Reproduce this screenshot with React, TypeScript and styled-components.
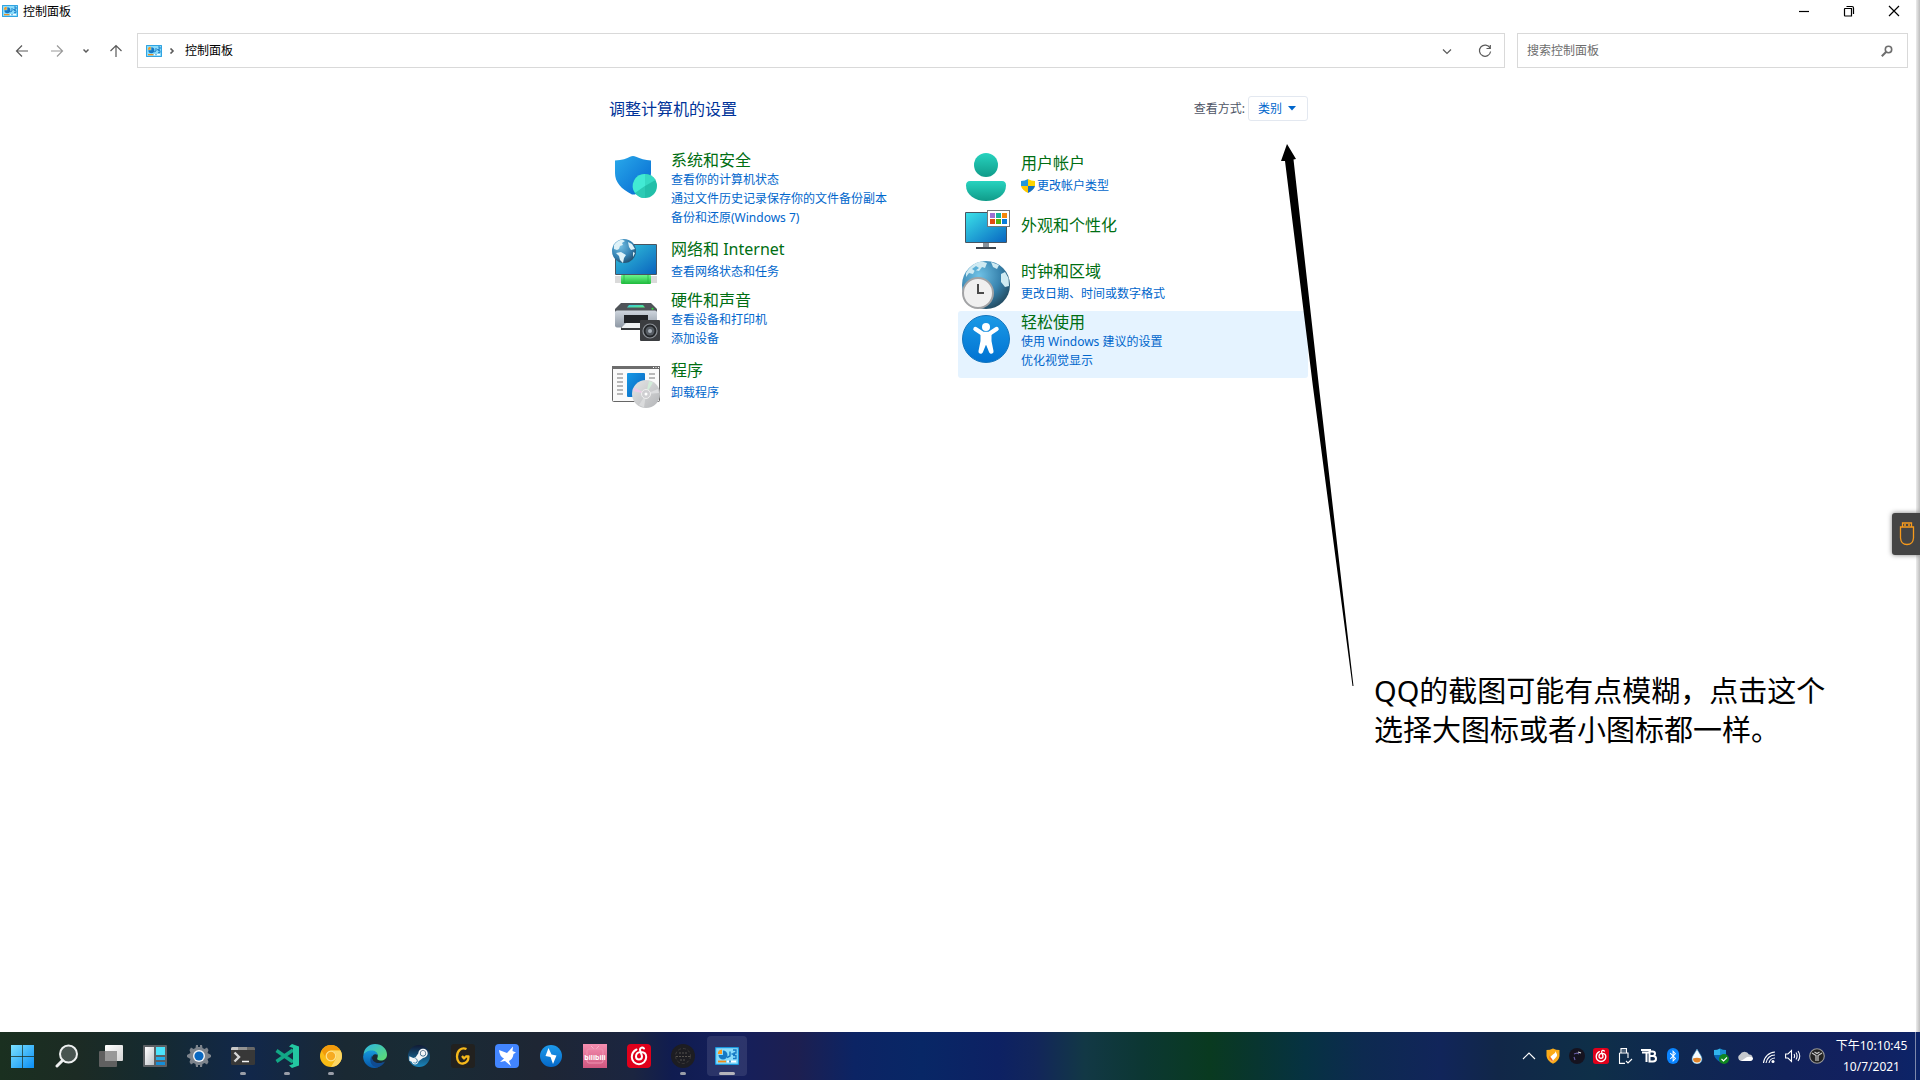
import React from "react";
import styled, { createGlobalStyle } from "styled-components";
import { FaSteamSymbol, FaBluetoothB } from "react-icons/fa";

const GlobalStyle = createGlobalStyle`
  * { box-sizing: border-box; }
  body {
    margin: 0;
    background: #fff;
    color: #000;
    font: 12px/19px "Noto Sans", "Noto Sans CJK SC", sans-serif;
  }
  h1, h2, p, ul { margin: 0; padding: 0; font-weight: 400; list-style: none; }
  button, input, select { font: inherit; color: inherit; margin: 0; padding: 0; border: 0; background: none; }
  a { text-decoration: none; color: inherit; }
  svg { display: block; flex: none; }
`;

/* ---------- layout ---------- */

const Desktop = styled.div`
  position: relative;
  display: flex;
  flex-direction: column;
  min-height: 100vh;
  overflow: hidden;
`;

const WindowRow = styled.div`
  flex: 1;
  display: flex;
`;

const WindowPane = styled.div`
  flex: 1;
  display: flex;
  flex-direction: column;
`;

const WindowShadow = styled.div`
  width: 4px;
  background: linear-gradient(90deg, #ececec, #bdbdbd);
`;

const TitleBar = styled.header`
  display: flex;
  align-items: center;
  justify-content: space-between;
  height: 22px;
  padding-left: 2px;
`;

const TitleText = styled.h1`
  display: flex;
  align-items: center;
  gap: 5px;
  font-size: 12px;
`;

const Caption = styled.div`
  display: flex;
`;

const CaptionButton = styled.button`
  display: grid;
  place-items: center;
  width: 45px;
  height: 20px;
  &:hover { background: #e9e9e9; }
`;

const Toolbar = styled.div`
  display: grid;
  grid-template-columns: 133px 60fr 17fr;
  align-items: center;
  padding: 11px 8px 0 4px;
`;

const NavButtons = styled.nav`
  display: flex;
  align-items: center;
`;

const NavButton = styled.button<{ $width?: number; $faded?: boolean }>`
  flex: none;
  display: grid;
  place-items: center;
  width: ${(p) => p.$width ?? 35}px;
  height: 33px;
  color: ${(p) => (p.$faded ? "#9a9a9a" : "#5a5a5a")};
`;

const AddressBar = styled.div`
  display: flex;
  align-items: center;
  height: 35px;
  margin-right: 12px;
  border: 1px solid #d9d9d9;
  padding-left: 8px;
`;

const Crumb = styled.a`
  flex: 1;
  padding-left: 3px;
`;

const SearchBox = styled.label`
  display: flex;
  align-items: center;
  height: 35px;
  padding: 0 14px 0 9px;
  border: 1px solid #d9d9d9;
  color: #6d6d6d;
`;

const SearchInput = styled.input`
  flex: 1;
  min-width: 0;
  outline: 0;
  &::placeholder { color: #6d6d6d; opacity: 1; }
`;

const Content = styled.main`
  width: 700px;
  margin: 0 auto;
  padding-top: 28px;
`;

const ContentHead = styled.div`
  display: flex;
  align-items: center;
  justify-content: space-between;
  height: 25px;
  padding-left: 1px;
`;

const Heading = styled.h2`
  font-size: 16px;
  line-height: 24px;
  color: #003399;
`;

const ViewBy = styled.div`
  display: flex;
  align-items: center;
  gap: 3px;
  color: #4e5565;
`;

const SelectFrame = styled.span`
  position: relative;
  display: block;
  color: #0066cc;
`;

const ViewSelect = styled.select`
  appearance: none;
  width: 60px;
  height: 25px;
  padding: 0 9px;
  border: 1px solid #e3e8f0;
  border-radius: 3px;
  background: #fff;
`;

const SelectArrow = styled.svg`
  position: absolute;
  right: 12px;
  top: 10px;
  pointer-events: none;
`;

const Columns = styled.div`
  display: grid;
  grid-template-columns: 1fr 1fr;
  align-items: start;
  padding-top: 28px;
`;

const Category = styled.li<{ $active?: boolean; $tall?: boolean }>`
  display: flex;
  gap: 11px;
  min-height: 54px;
  padding: 0 4px ${(p) => (p.$tall ? 8 : 0)}px;
  border-radius: 3px;
  background: ${(p) => (p.$active ? "#e5f3ff" : "transparent")};
  & > svg { margin-top: 4px; }
`;

const CategoryBody = styled.div<{ $links: number }>`
  display: grid;
  align-content: start;
  row-gap: ${(p) => (p.$links === 1 ? 3 : 0)}px;
  padding-top: ${(p) => (p.$links === 0 ? 13 : p.$links === 1 ? 5 : 2)}px;
`;

const CategoryTitle = styled.a`
  font-size: 16px;
  line-height: 19px;
  color: #006e12;
  &:hover { text-decoration: underline; }
`;

const TaskLink = styled.a`
  display: flex;
  align-items: center;
  gap: 2px;
  color: #0066cc;
  &:hover { text-decoration: underline; }
`;

/* ---------- overlays ---------- */

const ArrowMark = styled.svg`
  position: absolute;
  left: 1280px;
  top: 144px;
  pointer-events: none;
`;

const Note = styled.p`
  position: absolute;
  left: 1374px;
  top: 671px;
  font-size: 29px;
  line-height: 39px;
  white-space: nowrap;
`;

const UsbTab = styled.button`
  position: absolute;
  right: 0;
  top: 513px;
  display: grid;
  place-items: center;
  width: 28px;
  height: 42px;
  padding-left: 2px;
  border-radius: 3px 0 0 3px;
  background: #444;
  box-shadow: 0 0 5px rgba(0, 0, 0, 0.5);
`;

/* ---------- taskbar ---------- */

const Taskbar = styled.footer`
  display: flex;
  justify-content: space-between;
  height: 48px;
  color: #fff;
  background: linear-gradient(
    90deg,
    #1a3020 0%, #1c2b24 4%, #152a30 8%, #11274a 13%, #1a2933 18%, #182b35 22%,
    #1e2634 28%, #1b2540 33%, #101c50 35%, #151f5c 38.5%, #1d1f50 41.5%, #0c2464 44.5%,
    #082766 48%, #0d2163 52%, #12265a 54%, #123845 56.5%, #0c3733 59.5%, #093a20 63%,
    #083530 65.5%, #063242 68%, #0d2a50 71%, #11255a 75%, #112748 78%, #0e2f48 83%,
    #0f2850 87%, #11225a 93%, #122060 97%, #0c2468 100%
  );
`;

const AppList = styled.div`
  display: flex;
  align-items: center;
  padding-left: 1px;
`;

const AppSlot = styled.button<{ $active?: boolean }>`
  position: relative;
  display: grid;
  place-items: center;
  width: 40px;
  height: 40px;
  margin: 0 2px;
  border-radius: 4px;
  background: ${(p) => (p.$active ? "rgba(255,255,255,.1)" : "transparent")};
`;

const RunMark = styled.span<{ $wide?: boolean }>`
  position: absolute;
  bottom: 1px;
  left: 50%;
  width: ${(p) => (p.$wide ? 16 : 6)}px;
  height: 3px;
  border-radius: 2px;
  background: ${(p) => (p.$wide ? "#b4b4bc" : "#9a9ea8")};
  transform: translateX(-50%);
`;

const Tray = styled.div`
  display: flex;
  align-items: center;
`;

const TrayButton = styled.button`
  display: grid;
  place-items: center;
  width: 24px;
  height: 40px;
`;

const Clock = styled.time`
  margin: 0 7px 0 6px;
  width: 73px;
  text-align: center;
  line-height: 21px;
  white-space: nowrap;
`;

const PeekEdge = styled.div`
  align-self: stretch;
  width: 5px;
  border-left: 1px solid #7d88ac;
`;

/* ---------- drawings ---------- */

const G = ({ id, a, b, v }: { id: string; a: string; b: string; v?: boolean }) => (
  <linearGradient id={id} x1="0" y1="0" x2={v ? "0" : "1"} y2="1">
    <stop offset="0" stopColor={a} />
    <stop offset="1" stopColor={b} />
  </linearGradient>
);

const PanelIcon = ({ w = 16, h = 12 }) => (
  <svg width={w} height={h} viewBox="0 0 24 18">
    <rect width="24" height="18" rx="1" fill="#1a96dc" />
    <rect x="1.2" y="1.2" width="21.6" height="15.6" fill="#8adcfb" />
    <path d="M8 3.500A4.500 4.500 0 1 1 3.500 8H8z" fill="#1679c4" />
    <path d="M7 7V2.500A4.500 4.500 0 0 0 2.800 7z" fill="#fa9a1e" />
    <path d="M12 10.500L15 9V4.500M18 3H21V6H18.500M18 8.500H21V11.500H18M16.500 7H20" stroke="#1679c4" strokeWidth="1.4" fill="none" />
    <path d="M3 14.500h8" stroke="#f08a15" strokeWidth="1.800" />
    <path d="M12 14.500h9" stroke="#fff" strokeWidth="1.800" />
    <path d="M15 13.500v2" stroke="#1679c4" strokeWidth="1.600" />
  </svg>
);

const Stroke = ({ d, size = 14, w = 1.2 }: { d: string; size?: number; w?: number }) => (
  <svg width={size} height={size} viewBox={`0 0 ${size} ${size}`} fill="none" stroke="currentColor" strokeWidth={w}>
    <path d={d} />
  </svg>
);

const SecurityIcon = () => (
  <svg width="48" height="48" viewBox="0 0 48 48">
    <defs><G id="sec" a="#29a9ea" b="#0567d0" /></defs>
    <path d="M3 7.500C10 7 15 5.500 18 3.700Q21 2.500 24 3.700C28 5.500 33 7.200 39 7.500V20C39 30 32 37 23 41.500H20C9 36 3 29 3 20z" fill="url(#sec)" />
    <circle cx="33" cy="33" r="12" fill="#22bfa9" />
    <path d="M33 33V45A12 12 0 0 1 23 40z" fill="#2bcab4" />
    <path d="M33 33V21A12 12 0 0 0 23 40z" fill="#42ead4" />
    <path d="M33 33V21A12 12 0 0 1 43.500 27z" fill="#35dac3" />
  </svg>
);

const NetworkIcon = () => (
  <svg width="48" height="48" viewBox="0 0 48 48">
    <defs>
      <G id="net" a="#35c8dc" b="#0a63be" />
      <radialGradient id="glb" cx=".35" cy=".3" r=".75"><stop offset="0" stopColor="#75bfe2" /><stop offset=".6" stopColor="#3684b5" /><stop offset="1" stopColor="#24506f" /></radialGradient>
      <G id="grn" a="#6cf58c" b="#1fba3c" v />
    </defs>
    <rect x="3" y="5" width="42" height="31" rx="1" fill="#4a5560" />
    <rect x="4" y="6" width="40" height="29" fill="url(#net)" />
    <circle cx="12" cy="12" r="12" fill="url(#glb)" />
    <path d="M2 6C4 3 7 1 10 .5L13 2l-3 2 1 2-3 1-1 3-2 1-3-1zM4 14l5-1 5 3-2 3-1 5-3-3-1-4zM16 3l4 2 3 5-4 1-2-3zM21 13l2 1-2 4z" fill="#dff2f8" />
    <rect x="3" y="37" width="42" height="7" fill="#dadada" />
    <rect x="9" y="36" width="30" height="9" rx="1" fill="url(#grn)" />
    <path d="M12 36v9M36 36v9" stroke="#25b943" strokeWidth=".8" />
  </svg>
);

const HardwareIcon = () => (
  <svg width="48" height="48" viewBox="0 0 48 48">
    <defs><G id="prn" a="#cfd6de" b="#8e98a4" v /><G id="scn" a="#36c6e8" b="#5bf07d" /></defs>
    <path d="M9 10H39L45 16V19H3V16z" fill="#4f5358" />
    <path d="M17 12H31L33 14.500H15z" fill="url(#scn)" />
    <circle cx="40.500" cy="15.800" r="1" fill="#2fe43f" />
    <rect x="3" y="17.500" width="42" height="17" rx="2" fill="url(#prn)" />
    <rect x="12" y="22" width="24" height="8" fill="#202327" />
    <path d="M9 34H30V37H9z" fill="#35383b" />
    <path d="M14 30H34L31 35H9z" fill="#edf0f2" />
    <rect x="28" y="27" width="20" height="21" rx="1" fill="#3b3d40" />
    <circle cx="38" cy="38" r="7" fill="#24272a" stroke="#8d9298" strokeWidth="1.200" />
    <circle cx="38" cy="38" r="4.500" fill="#555b62" />
    <circle cx="38" cy="38" r="2" fill="#a9b1ba" />
  </svg>
);

const ProgramsIcon = () => (
  <svg width="48" height="48" viewBox="0 0 48 48">
    <defs><G id="prg" a="#1599e6" b="#0a62bd" /><G id="cd" a="#e6e6e6" b="#b3b5b8" /></defs>
    <rect x=".5" y="6.500" width="47" height="35" rx="1" fill="#fafafa" stroke="#666" />
    <path d="M0 6H48V9H0z" fill="#6d6d6d" />
    <path d="M41 7.500h1M43.500 7.500h1M46 7.500h1" stroke="#fff" />
    <path d="M5 14h6M5 18h6M5 22h6M5 26h6M5 30h6M5 34h6M37 14h6M37 18h6" stroke="#777" />
    <rect x="15" y="13" width="18" height="24" rx="1" fill="url(#prg)" />
    <circle cx="34" cy="34" r="14" fill="url(#cd)" />
    <path d="M34 34L22.500 27.500L21 31z" fill="#eecbe6" />
    <path d="M34 34L37 21L41 22.500z" fill="#d2ecd9" />
    <path d="M34 34L46 29L47 33z" fill="#dcdddf" />
    <path d="M34 34L27 45L32 47.500z" fill="#dadbdc" />
    <circle cx="34" cy="34" r="4.500" fill="#cfcfd2" stroke="#efefef" />
    <circle cx="34" cy="34" r="1.500" fill="#fff" />
  </svg>
);

const UserIcon = () => (
  <svg width="48" height="48" viewBox="0 0 48 48">
    <defs><G id="usr" a="#27d3bf" b="#109b89" v /></defs>
    <circle cx="24" cy="12" r="12" fill="url(#usr)" />
    <path d="M8 28H40Q44 28 44 32.500C44 42 35 48 24 48S4 42 4 32.500Q4 28 8 28z" fill="url(#usr)" />
  </svg>
);

const AppearanceIcon = () => (
  <svg width="48" height="48" viewBox="0 0 48 48">
    <defs><G id="app" a="#3ae0e8" b="#0867c2" /></defs>
    <rect x="21" y="35" width="6" height="6" fill="#89939c" />
    <rect x="14" y="40" width="20" height="2" fill="#3d454d" />
    <rect x="3" y="5" width="42" height="31" rx="1" fill="#475460" />
    <rect x="4" y="6" width="40" height="29" fill="url(#app)" />
    <rect x="25.500" y="3.500" width="22" height="16" fill="#fff" stroke="#74777a" />
    <path d="M28 6h5v5h-5z" fill="#9b6fd3" /><path d="M34 6h5v5h-5z" fill="#14b39d" /><path d="M40 6h5v5h-5z" fill="#f5870a" />
    <path d="M28 12h5v5h-5z" fill="#e34b12" /><path d="M34 12h5v5h-5z" fill="#58b30c" /><path d="M40 12h5v5h-5z" fill="#087ddb" />
  </svg>
);

const ClockIcon = () => (
  <svg width="48" height="48" viewBox="0 0 48 48">
    <defs><radialGradient id="wld" cx=".35" cy=".3" r=".75"><stop offset="0" stopColor="#70c2e6" /><stop offset=".6" stopColor="#3883ae" /><stop offset="1" stopColor="#234c62" /></radialGradient></defs>
    <circle cx="24" cy="24" r="24" fill="url(#wld)" />
    <path d="M4 12C8 5 14 1 20 .5L25 2L23 7L20 6L17 10L13 9L11 13L7 12L4 16zM29 1L37 4L35 8L31 6zM39 13L43 11L46.500 17L47 25L43 26L39 21z" fill="#cfeaf2" />
    <path d="M10 8l4-3 3 2-4 3z" fill="#59aed6" />
    <circle cx="16" cy="32" r="15" fill="#f0f0f0" stroke="#a2a3a5" strokeWidth="2" />
    <path d="M16 23V32H22" fill="none" stroke="#4a4a4a" strokeWidth="2" />
  </svg>
);

const EaseIcon = () => (
  <svg width="48" height="48" viewBox="0 0 48 48">
    <defs><G id="eas" a="#1b9ae6" b="#0072d2" v /></defs>
    <circle cx="24" cy="24" r="23.500" fill="url(#eas)" stroke="#1475bd" />
    <circle cx="24" cy="12" r="4" fill="#fff" />
    <path d="M13.500 14L21 19H27L34.500 14M24 19V28" stroke="#fff" strokeWidth="4.500" strokeLinecap="round" strokeLinejoin="round" fill="none" />
    <path d="M18.500 17H29.500V26L31.500 36C32 39 28 40 27 37L24 29.500L21 37C20 40 16 39 16.500 36L18.500 26z" fill="#fff" />
  </svg>
);

const UacShield = () => (
  <svg width="14" height="14" viewBox="0 0 14 14">
    <path d="M0 2Q4 2 7 0V7H0z" fill="#2197dc" /><path d="M14 2Q10 2 7 0V7H14z" fill="#ffd400" />
    <path d="M0 7H7V14Q1 11 0 7z" fill="#ffc800" /><path d="M14 7H7V14Q13 11 14 7z" fill="#146fbd" />
  </svg>
);

const Box24 = ({ children, size = 24 }: { children: React.ReactNode; size?: number }) => (
  <svg width={size} height={size} viewBox="0 0 24 24">{children}</svg>
);

const CloudMusicLogo = ({ size = 24 }: { size?: number }) => (
  <Box24 size={size}>
    <rect width="24" height="24" rx="4" fill="#e0001b" />
    <path
      d="M9.500 5.500C6.500 7 4.800 9.800 4.800 13A7.200 7.200 0 0 0 19.200 13C19.200 9.700 16.800 8 13.700 8C10.800 8 9 10 9 12.500A3 3 0 0 0 15 12.500C15 11 13 7.500 13 5.500C13 3.500 15.500 3 17 4.500"
      fill="none" stroke="#fff" strokeWidth="2" strokeLinecap="round"
    />
  </Box24>
);

const StartLogo = () => (
  <Box24>
    <defs><linearGradient id="win" gradientUnits="userSpaceOnUse" x1="0" y1="0" x2="24" y2="24"><stop offset="0" stopColor="#7de3ff" /><stop offset="1" stopColor="#088df5" /></linearGradient></defs>
    <path d="M0 1H11.300V12.200H0zM12 1H23V12.200H12zM0 13H11.300V24H0zM12 13H23V24H12z" fill="url(#win)" />
  </Box24>
);
const SearchLogo = () => (
  <Box24><circle cx="13.500" cy="10" r="8.500" fill="#485450" stroke="#eef0f0" strokeWidth="2" /><path d="M7.500 16.500L2 22" stroke="#eef0f0" strokeWidth="3" strokeLinecap="round" /></Box24>
);
const TaskViewLogo = () => (
  <Box24><defs><G id="tv" a="#ffffff" b="#d4d4d4" /></defs><rect x="6" y="1" width="18" height="16" rx="1" fill="url(#tv)" /><rect x="0" y="7" width="18" height="16" rx="1" fill="#606060" /><path d="M6 7H18V17H6z" fill="#989898" /></Box24>
);
const WidgetsLogo = () => (
  <Box24><defs><G id="wd" a="#fff" b="#bcc1c6" /></defs><rect y="1" width="24" height="22" rx="1" fill="#5c6064" /><rect x="2" y="3" width="9" height="18" fill="url(#wd)" /><rect x="13" y="3" width="9" height="8" fill="#4be3fb" /><rect x="13" y="13" width="9" height="3" fill="#22aee8" /><rect x="13" y="18" width="9" height="3" fill="#158ed8" /></Box24>
);
const SettingsLogo = () => (
  <Box24>
    <path d="M8.500 4L9 1H11V3H13V1H15L15.500 4L17.500 5L20 3.500L21.500 6L20.500 9L24 11V13L20.500 15L21.500 18L20 20.500L17.500 19L15.500 20L15 23H13V21H11V23H9L8.500 20L6.500 19L4 20.500L2.500 18L3.500 15L0 13V11L3.500 9L2.500 6L4 3.500L6.500 5z" fill="#7d848c" />
    <circle cx="12" cy="12" r="6" fill="#f2f5f8" /><circle cx="12" cy="12" r="4.600" fill="#0867c0" />
  </Box24>
);
const TerminalLogo = () => (
  <Box24><rect y="3" width="24" height="18" rx="1.500" fill="#383838" /><path d="M0 6V4.500Q0 3 1.500 3H16V6z" fill="#c7c7c7" /><path d="M7 3h9v3H7z" fill="#929292" /><path d="M16 3h6.500Q24 3 24 4.500V6h-8z" fill="#686868" /><path d="M3.500 8.500L8 13L3.500 17.500" fill="none" stroke="#d6d6d6" strokeWidth="2.400" /><path d="M11 17.500h7" stroke="#f5f5f5" strokeWidth="1.500" /></Box24>
);
const CodeLogo = () => (
  <Box24><path d="M18 6L1.500 17.500M18 18L1.500 6.500" stroke="#12a886" strokeWidth="3.400" /><path d="M17 0L24 2.500V21.500L17 24L14 21.500L18 20V4L14 2.500z" fill="#23c7a1" /></Box24>
);
const CanaryLogo = () => (
  <Box24><circle cx="12" cy="12" r="11" fill="#f9bc15" /><path d="M2.500 6.500A11 11 0 0 1 21.500 6.500H12A6 6 0 0 0 7 14z" fill="#f29a0b" /><path d="M21.500 6.500A11 11 0 0 1 12 23L17 14.500A6 6 0 0 0 12 6.500z" fill="#fdd765" /><circle cx="12" cy="12" r="4.800" fill="#f6ab22" stroke="#fde18c" strokeWidth="1.300" /></Box24>
);
const EdgeLogo = () => (
  <Box24>
    <defs><G id="ed1" a="#2bb5e8" b="#60de6a" /><G id="ed2" a="#1598dc" b="#0756a7" v /></defs>
    <path d="M.5 11C1 4 6 0 12 0C19 0 24 5 24 10.500C24 14.500 21 16.500 18 16.500C15 16.500 13.500 15.500 14.500 13.500C16 10 12.500 7 9 7C5 7 2 9 .5 11z" fill="url(#ed1)" />
    <path d="M.2 12C1 8.500 5 6.500 8.500 6.500C12 6.500 14.500 8.500 14.700 11C11 9 8.500 12 9 15C9.500 19 14 21.500 20 18.500C17 23 14 24 11 24C5 24-.5 18 .2 12z" fill="url(#ed2)" />
    <path d="M9 11.500C5 17 9 23 14 23.500C18 22.500 20.500 20.500 22 17.500C14 21.500 8 17.500 9 11.500z" fill="#104b91" />
  </Box24>
);
const SteamLogo = () => (
  <Box24>
    <defs><G id="stm" a="#101a34" b="#1a86bb" v /></defs>
    <circle cx="12" cy="12" r="11" fill="url(#stm)" />
    <FaSteamSymbol x={1} y={2} size={21} color="#f3f5f7" />
  </Box24>
);
const GoldLogo = () => (
  <Box24><rect width="24" height="24" rx="3" fill="#22211f" /><path d="M15.500 5C10 2.500 6 7.500 6 12.500C6 18 9 20 12 19.500C16 19 17.500 16 17.500 12.500H15L13 14.500L11 12" fill="none" stroke="#f6b91b" strokeWidth="2.300" strokeLinejoin="round" /></Box24>
);
const BirdLogo = () => (
  <Box24><rect width="24" height="24" rx="4" fill="#4285ff" /><path d="M4 6L12 9L18 2.500L17.500 7L21 8.500L18.500 10C18 14 16 16 14 17L16 22L10 17L5 18L9 14.500C6 13 4.500 10.500 4 6z" fill="#fff" /></Box24>
);
const BoltLogo = () => (
  <Box24><defs><G id="blt" a="#1d9bec" b="#0568c8" v /></defs><circle cx="12" cy="12" r="11" fill="url(#blt)" /><path d="M9.500 4L6.500 12L11.500 13L14 20L17.500 11.500L12.500 10.500z" fill="#fff" /></Box24>
);
const BiliLogo = () => (
  <Box24>
    <defs><G id="bil" a="#f58fb0" b="#cf567f" v /></defs><rect width="24" height="24" fill="url(#bil)" />
    <path d="M8 2l3 3M16 2l-3 3" stroke="#f7b3c9" /><rect x="4" y="5" width="16" height="14" rx="2" fill="none" stroke="#ee94b2" />
    <text x="12" y="16" textAnchor="middle" fontSize="7" fontWeight="700" fill="#fff">bilibili</text>
  </Box24>
);
const DarkBadge = () => (
  <Box24><circle cx="12" cy="12" r="12" fill="#1d1d22" /><circle cx="12" cy="12" r="7.500" fill="none" stroke="#3c3a3a" strokeDasharray="3 2" /><path d="M8 9h8M5 12.500h14M9 16h6" stroke="#55524e" strokeDasharray="2 1" /></Box24>
);

const Small = ({ children }: { children: React.ReactNode }) => (
  <svg width="16" height="16" viewBox="0 0 16 16" fill="none" stroke="#fff" strokeWidth="1.1">{children}</svg>
);

const trayIcons: { name: string; icon: React.ReactNode }[] = [
  { name: "显示隐藏的图标", icon: <Small><path d="M2 11L8 5L14 11" /></Small> },
  { name: "火绒安全", icon: <Small><path d="M1.500 2Q5 2 8 .5Q11 2 14.500 2V8Q14 13 8 15.800Q2 13 1.500 8z" fill="#fbab18" stroke="none" /><path d="M10.500 3C11 6 5 7 5 10.500C5 13 8 14 8 14C7.500 11 12.500 10 12 6.500z" fill="#fff" stroke="none" /><path d="M8 14C5 12 3.500 10 4.500 7.500C5.500 10 8 11 8 14z" fill="#f56a12" stroke="none" /></Small> },
  { name: "夜间模式", icon: <Small><circle cx="8" cy="8" r="8" fill="#15131f" stroke="none" /><path d="M5 6l3-1 2 1M5 9l1 3" stroke="#6a5fa9" /><path d="M9 4l3 1" stroke="#ddd" /></Small> },
  { name: "网易云音乐", icon: <CloudMusicLogo size={16} /> },
  { name: "安全删除硬件", icon: <Small><path d="M4 5V.6H9.500V5M2.500 5H11V10M2.500 5V15.400H8M5.500 3h1M7.500 3h1M9 13l2 2L15 11" /></Small> },
  { name: "TranslucentTB", icon: <Small><path d="M0 2H10M1 4.500H8M5.500 4.500V14" strokeWidth="2" /><path d="M8.500 3.500H11.500Q14 3.500 14 5.500Q14 8 11.500 8H8.500H12Q15 8 15 10.700Q15 13.500 12 13.500H8.500z" strokeWidth="2" /></Small> },
  { name: "蓝牙", icon: <Small><rect x="2" width="12" height="16" rx="6" fill="#0a84ff" stroke="none" /><FaBluetoothB x={2} y={2} size={12} color="#fff" stroke="none" /></Small> },
  { name: "水滴", icon: <Small><path d="M8 1C10 5 13 8 13 11A5 5 0 0 1 3 11C3 8 6 5 8 1z" fill="#f4fbff" stroke="#4293c4" strokeWidth=".6" /><path d="M4 10.500Q8 9 12 10.500A4 4 0 0 1 4 10.500z" fill="#df8329" stroke="none" /></Small> },
  { name: "Windows 安全中心", icon: <Small><path d="M1 2Q4 2 7 .5V7H1z" fill="#31b4ed" stroke="none" /><path d="M13 2Q10 2 7 .5V7H13z" fill="#198ed2" stroke="none" /><path d="M1 7H13Q12 11 7 14Q2 11 1 7z" fill="#0968b5" stroke="none" /><circle cx="11" cy="11" r="5" fill="#0f8620" stroke="none" /><path d="M8.500 11l2 2L14 9.500" /></Small> },
  { name: "OneDrive", icon: <Small><path d="M4 13A3.500 3.500 0 0 1 3 6.500A5 5 0 0 1 12 6.500A3.300 3.300 0 0 1 13 13z" fill="#c6c9ce" stroke="none" /><path d="M4 13L10 9Q16 8 16 11Q15.500 13 13 13z" fill="#fff" stroke="none" /></Small> },
  { name: "网络", icon: <Small><circle cx="12" cy="13.500" r="1.500" fill="#fff" stroke="none" /><path d="M8 15A6 6 0 0 1 14 10M5 15A9 9 0 0 1 14 7M2.500 15A12 12 0 0 1 14 4" /></Small> },
  { name: "音量", icon: <Small><path d="M.6 6H3L6.500 2.500V13.500L3 10H.6zM9 6Q10.200 8 9 10M11 4.500Q13.200 8 11 11.500M13 3Q16.500 8 13 13" /></Small> },
  { name: "游戏加速", icon: <Small><circle cx="8" cy="8" r="7.300" fill="#222" stroke="#999" /><path d="M3 5L7 7.500V13M13 5L9 7.500V13M5.500 4L8 5.500L10.500 4" stroke="#ccc" strokeWidth="1.200" /></Small> },
];

const apps: { name: string; icon: React.ReactNode; run?: boolean; active?: boolean }[] = [
  { name: "开始", icon: <StartLogo /> },
  { name: "搜索", icon: <SearchLogo /> },
  { name: "任务视图", icon: <TaskViewLogo /> },
  { name: "小组件", icon: <WidgetsLogo /> },
  { name: "设置", icon: <SettingsLogo /> },
  { name: "终端", icon: <TerminalLogo />, run: true },
  { name: "VS Code Insiders", icon: <CodeLogo />, run: true },
  { name: "Chrome Canary", icon: <CanaryLogo />, run: true },
  { name: "Edge", icon: <EdgeLogo /> },
  { name: "Steam", icon: <SteamLogo /> },
  { name: "游戏加加", icon: <GoldLogo /> },
  { name: "飞鸟", icon: <BirdLogo /> },
  { name: "闪电", icon: <BoltLogo /> },
  { name: "哔哩哔哩", icon: <BiliLogo /> },
  { name: "网易云音乐", icon: <CloudMusicLogo /> },
  { name: "工具", icon: <DarkBadge />, run: true },
  { name: "控制面板", icon: <PanelIcon w={24} h={18} />, run: true, active: true },
];

/* ---------- data ---------- */

type Item = { title: string; icon: React.ReactNode; links: string[]; shield?: boolean; active?: boolean };

const leftItems: Item[] = [
  { title: "系统和安全", icon: <SecurityIcon />, links: ["查看你的计算机状态", "通过文件历史记录保存你的文件备份副本", "备份和还原(Windows 7)"] },
  { title: "网络和 Internet", icon: <NetworkIcon />, links: ["查看网络状态和任务"] },
  { title: "硬件和声音", icon: <HardwareIcon />, links: ["查看设备和打印机", "添加设备"] },
  { title: "程序", icon: <ProgramsIcon />, links: ["卸载程序"] },
];

const rightItems: Item[] = [
  { title: "用户帐户", icon: <UserIcon />, links: ["更改帐户类型"], shield: true },
  { title: "外观和个性化", icon: <AppearanceIcon />, links: [] },
  { title: "时钟和区域", icon: <ClockIcon />, links: ["更改日期、时间或数字格式"] },
  { title: "轻松使用", icon: <EaseIcon />, links: ["使用 Windows 建议的设置", "优化视觉显示"], active: true },
];

const CategoryList = ({ items }: { items: Item[] }) => (
  <ul>
    {items.map((it) => (
      <Category key={it.title} $active={it.active} $tall={it.links.length > 1}>
        {it.icon}
        <CategoryBody $links={it.links.length}>
          <CategoryTitle href="#">{it.title}</CategoryTitle>
          {it.links.map((l) => (
            <TaskLink href="#" key={l}>
              {it.shield && <UacShield />}
              {l}
            </TaskLink>
          ))}
        </CategoryBody>
      </Category>
    ))}
  </ul>
);

export default function App() {
  return (
    <Desktop>
      <GlobalStyle />
      <WindowRow>
        <WindowPane>
          <TitleBar>
            <TitleText><PanelIcon />控制面板</TitleText>
            <Caption>
              <CaptionButton aria-label="最小化"><Stroke size={12} d="M1 6.500H11" /></CaptionButton>
              <CaptionButton aria-label="还原"><Stroke size={12} d="M2 3.500H8.500V11H2Q1.500 11 1.500 10.500V4Q1.500 3.500 2 3.500M3.500 1.500H9Q10.500 1.500 10.500 3V9" /></CaptionButton>
              <CaptionButton aria-label="关闭"><Stroke size={12} d="M1 1L11 11M11 1L1 11" /></CaptionButton>
            </Caption>
          </TitleBar>
          <Toolbar>
            <NavButtons aria-label="导航">
              <NavButton aria-label="后退"><Stroke d="M13 7H1.500M7 1.500L1.500 7L7 12.500" /></NavButton>
              <NavButton aria-label="前进" $faded><Stroke d="M1 7H12.500M7 1.500L12.500 7L7 12.500" /></NavButton>
              <NavButton aria-label="最近的位置" $width={24}><Stroke size={6} w={1.5} d="M.5 1.500L3 4L5.500 1.500" /></NavButton>
              <NavButton aria-label="上移"><Stroke d="M7 13V1.500M1.500 7L7 1.500L12.500 7" /></NavButton>
            </NavButtons>
            <AddressBar>
              <PanelIcon />
              <NavButton aria-label="展开" $width={20}><Stroke size={6} w={1.6} d="M1.500 .5L4 3L1.500 5.500" /></NavButton>
              <Crumb href="#">控制面板</Crumb>
              <NavButton aria-label="历史记录" $width={38}><Stroke size={10} d="M1 3.500L5 7.500L9 3.500" /></NavButton>
              <NavButton aria-label="刷新" $width={38}><Stroke d="M12 4A5.600 5.600 0 1 0 12.600 7.500M12.300 1V4.500H8.500" /></NavButton>
            </AddressBar>
            <SearchBox>
              <SearchInput aria-label="搜索" placeholder="搜索控制面板" />
              <svg width="12" height="12" viewBox="0 0 12 12" fill="none" stroke="#6d6d6d" strokeWidth="1.6">
                <circle cx="7.500" cy="4.500" r="3.200" /><path d="M5 7L.8 11.200" strokeWidth="2" />
              </svg>
            </SearchBox>
          </Toolbar>
          <Content>
            <ContentHead>
              <Heading>调整计算机的设置</Heading>
              <ViewBy>
                <label htmlFor="view">查看方式:</label>
                <SelectFrame>
                  <ViewSelect id="view" defaultValue="类别">
                    <option>类别</option>
                    <option>大图标</option>
                    <option>小图标</option>
                  </ViewSelect>
                  <SelectArrow width="8" height="5" viewBox="0 0 8 5"><path d="M0 0H8L4 4.500z" fill="#0066cc" /></SelectArrow>
                </SelectFrame>
              </ViewBy>
            </ContentHead>
            <Columns>
              <CategoryList items={leftItems} />
              <CategoryList items={rightItems} />
            </Columns>
          </Content>
        </WindowPane>
        <WindowShadow />
      </WindowRow>

      <ArrowMark width="76" height="544" viewBox="0 0 76 544">
        <path d="M7 0L16 15L13.500 15.500L39 243L73.500 542H72.500L33 243L5 17L1 17z" />
      </ArrowMark>
      <Note>QQ的截图可能有点模糊，点击这个<br />选择大图标或者小图标都一样。</Note>
      <UsbTab aria-label="U 盘">
        <svg width="16" height="24" viewBox="0 0 16 24" fill="none" stroke="#f79a1c" strokeWidth="1.300">
          <path d="M3.500 5V1H12.500V5M1.500 5H14.500V16Q14 22.500 8 22.500Q2 22.500 1.500 16zM5 3H7M9 3H11" />
        </svg>
      </UsbTab>

      <Taskbar>
        <AppList>
          {apps.map((a) => (
            <AppSlot key={a.name} aria-label={a.name} $active={a.active}>
              {a.icon}
              {a.run && <RunMark $wide={a.active} />}
            </AppSlot>
          ))}
        </AppList>
        <Tray>
          {trayIcons.map((t) => (
            <TrayButton key={t.name} aria-label={t.name}>{t.icon}</TrayButton>
          ))}
          <Clock>下午10:10:45<br />10/7/2021</Clock>
          <PeekEdge />
        </Tray>
      </Taskbar>
    </Desktop>
  );
}
